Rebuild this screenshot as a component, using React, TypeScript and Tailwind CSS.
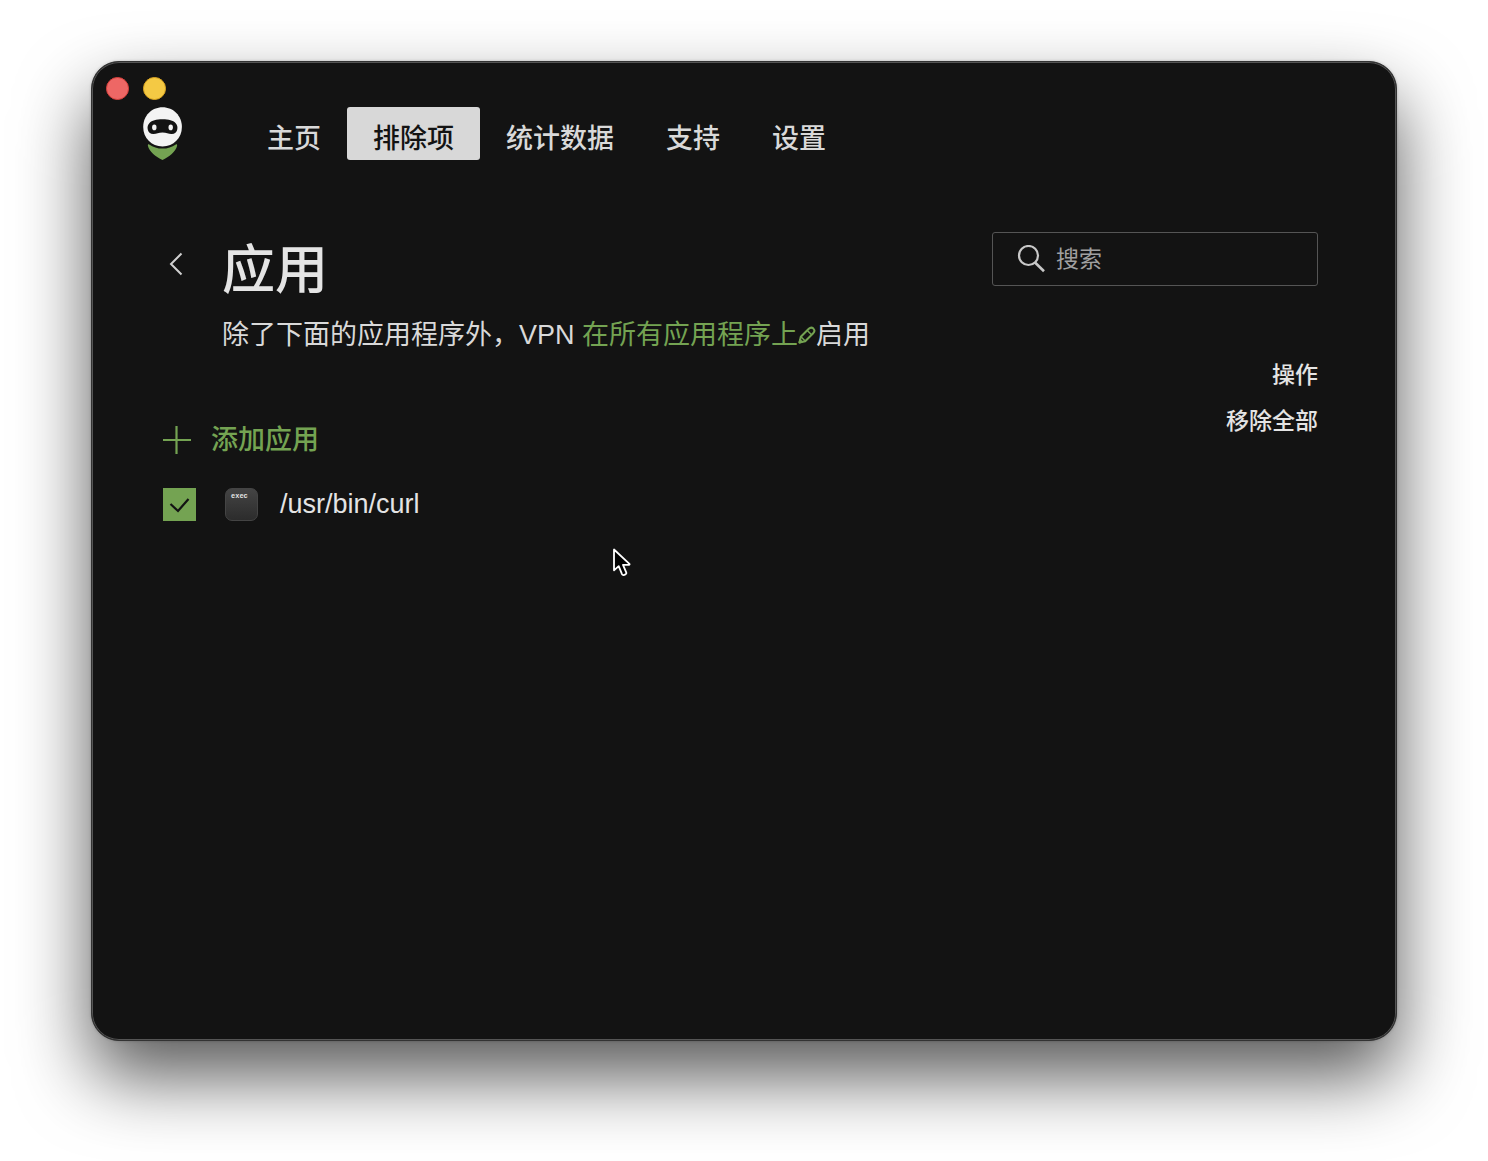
import { useState } from 'react';

const NAV_ITEMS = ['主页', '排除项', '统计数据', '支持', '设置'];

function Logo() {
  return (
    <svg className="h-[53px] w-10" viewBox="0 0 40 53" aria-hidden="true">
      <path
        d="M6.200 37.400C10 40 14.500 41.600 19.500 41.600s9.500-1.600 13.300-4.200c.9-.5 1.500.1 1.300 1.300C32.800 44.500 26 50 19.500 53 13 50 6.200 44.500 4.900 38.700c-.2-1.200.4-1.800 1.300-1.300Z"
        fill="#74a352"
      />
      <path
        d="M19.500.3C30.500.3 38.900 9 38.900 20S30.500 39.400 19.500 39.400.2 31 .2 20 8.500.3 19.500.3Z"
        fill="#f3f3f3"
      />
      <path
        d="M19.500 12.300c6.500 0 10.500 1.400 13 3.600 1.800 1.700 2.200 4 1.800 6.300-.5 3-2.700 4.900-5.800 4.800-3.200-.1-5-1.400-9-1.400s-5.800 1.300-9 1.400c-3.100.1-5.300-1.800-5.800-4.800-.4-2.300 0-4.600 1.800-6.300 2.500-2.200 6.500-3.600 13-3.600Z"
        fill="#131313"
      />
      <ellipse cx="11.300" cy="20.400" rx="2.200" ry="2.800" fill="#f3f3f3" />
      <ellipse cx="27.700" cy="20.400" rx="2.200" ry="2.800" fill="#f3f3f3" />
    </svg>
  );
}

function BackIcon() {
  return (
    <svg className="h-6 w-4" viewBox="0 0 16 24" fill="none" aria-hidden="true">
      <path d="M13.500 1.500 3 12l10.500 10.500" stroke="#d0d0d0" strokeWidth="2" />
    </svg>
  );
}

function SearchIcon() {
  return (
    <svg className="h-7 w-7 shrink-0" viewBox="0 0 28 28" fill="none" stroke="#c8c8c8" strokeWidth="2.200" aria-hidden="true">
      <circle cx="11.500" cy="10.500" r="9.500" />
      <path d="m18 17.500 9 8.700" strokeWidth="2.600" />
    </svg>
  );
}

function PencilIcon() {
  return (
    <svg className="inline-block h-[18px] w-[18px] align-baseline" viewBox="0 0 18 18" fill="none" stroke="#74a352" strokeWidth="2" strokeLinejoin="round" aria-hidden="true">
      <path d="M1.500 16.500 2.800 10.800l8-8c1.500-1.500 3.200-1.500 4.600-.2 1.400 1.400 1.300 3.100-.2 4.600l-8 8Z" />
      <path d="M9.300 4.500l4 4M3.200 11l3.800 3.800" strokeWidth="1.500" />
      <path d="M1.500 16.500l.6-2.500 1.900 1.900Z" fill="#74a352" />
    </svg>
  );
}

function PlusIcon() {
  return (
    <svg className="h-7 w-7" viewBox="0 0 28 28" fill="none" aria-hidden="true">
      <path d="M13.500 0v28M0 14h28" stroke="#74a352" strokeWidth="2.200" />
    </svg>
  );
}

function CheckIcon() {
  return (
    <svg className="pointer-events-none absolute inset-0 h-full w-full" viewBox="0 0 33 33" fill="none" aria-hidden="true">
      <path d="M7.500 16 15 23l10.500-12" stroke="#131313" strokeWidth="2.200" />
    </svg>
  );
}

function Cursor() {
  return (
    <svg className="pointer-events-none absolute left-[520px] top-[485px] h-[30px] w-5" viewBox="0 0 20 30" aria-hidden="true">
      <path
        d="M2 2.500v20.800l4.700-4.200 3.300 8c.4.900 1.300 1.200 2.200.8l1.200-.5c.9-.4 1.200-1.200.8-2.100L11 17.800h6c.6 0 .8-.5.4-.9Z"
        fill="#000"
        stroke="#fff"
        strokeWidth="1.800"
        strokeLinejoin="round"
      />
    </svg>
  );
}

export default function App() {
  const [active, setActive] = useState('排除项');
  const [query, setQuery] = useState('');
  const [apps, setApps] = useState([{ path: '/usr/bin/curl', enabled: true }]);

  const toggleApp = (path: string) => {
    setApps(apps.map((a) => (a.path === path ? { ...a, enabled: !a.enabled } : a)));
  };

  return (
    <div className="flex min-h-screen flex-col bg-white px-[91px] pt-[61px] pb-[120px] font-['Liberation_Sans','Noto_Sans_CJK_SC',sans-serif] text-[27px] text-[#d9d9d9]">
      <div className="relative flex flex-1 flex-col rounded-[28px] border border-[#333] bg-[#131313] shadow-[inset_0_0_0_1px_#555,0_0_3px_rgba(0,0,0,0.2),0_36px_72px_rgba(0,0,0,0.65)]">
        <div className="flex gap-[14px] px-[14px] pt-[15px]">
          <button type="button" aria-label="关闭" className="h-[23px] w-[23px] rounded-full border border-[#d9403c] bg-[#ee6765]" />
          <button type="button" aria-label="最小化" className="h-[23px] w-[23px] rounded-full border border-[#dba520] bg-[#f4c944]" />
        </div>

        <header className="mt-[7px] flex items-start pl-[51px]">
          <Logo />
          <nav className="ml-[58px] flex">
            {NAV_ITEMS.map((item) => (
              <button
                key={item}
                type="button"
                onClick={() => setActive(item)}
                className={`h-[53px] rounded-[3px] px-[26px] pt-3 leading-[41px] font-medium ${
                  active === item ? 'bg-[#d8d8d8] text-[#131313]' : 'text-[#d9d9d9]'
                }`}
              >
                {item}
              </button>
            ))}
          </nav>
        </header>

        <main className="mt-[72px] flex flex-1 pr-[78px] pl-[71px]">
          <div className="flex-1">
            <div className="flex">
              <button type="button" aria-label="返回" className="flex h-16 w-[59px] items-center pl-[5px]">
                <BackIcon />
              </button>
              <div>
                <h1 className="text-[53px] leading-[78px] font-medium text-[#e4e4e4]">应用</h1>
                <p className="leading-[50px] whitespace-nowrap">
                  除了下面的应用程序外，VPN{' '}
                  <a href="#mode" className="text-[#74a352]">
                    在所有应用程序上
                    <PencilIcon />
                  </a>
                  启用
                </p>
              </div>
            </div>

            <button type="button" className="mt-[55px] flex h-[50px] items-center gap-5 leading-[50px] font-medium text-[#74a352]">
              <PlusIcon />
              添加应用
            </button>

            <ul className="mt-[23px]">
              {apps.map((app) => (
                <li key={app.path}>
                  <label className="flex items-center">
                    <span className="relative h-[33px] w-[33px]">
                      <input
                        type="checkbox"
                        checked={app.enabled}
                        onChange={() => toggleApp(app.path)}
                        className="block h-full w-full appearance-none border border-[#74a352] checked:bg-[#74a352]"
                      />
                      {app.enabled && <CheckIcon />}
                    </span>
                    <span className="ml-[29px] h-[33px] w-[33px] rounded-[7px] border border-[#444] bg-linear-to-b from-[#444] to-[#2c2c2c] pl-[5px] font-['Liberation_Mono',monospace] text-[7px] leading-[14px] font-bold text-[#e4e4e4]">
                      exec
                    </span>
                    <span className="ml-[22px] leading-[33px] text-[#e4e4e4]">{app.path}</span>
                  </label>
                </li>
              ))}
            </ul>
          </div>

          <aside className="flex w-[326px] flex-col items-end text-[23px] leading-[46px] font-medium text-[#e4e4e4]">
            <label className="flex h-[54px] w-full items-center gap-[11px] rounded-[3px] border border-[#555] px-6 font-normal">
              <SearchIcon />
              <input
                type="text"
                aria-label="搜索"
                placeholder="搜索"
                value={query}
                onChange={(e) => setQuery(e.target.value)}
                className="w-full bg-transparent outline-none placeholder:text-[#a0a0a0]"
              />
            </label>
            <h2 className="mt-[66px]">操作</h2>
            <button type="button" onClick={() => setApps([])}>
              移除全部
            </button>
          </aside>
        </main>

        <Cursor />
      </div>
    </div>
  );
}
